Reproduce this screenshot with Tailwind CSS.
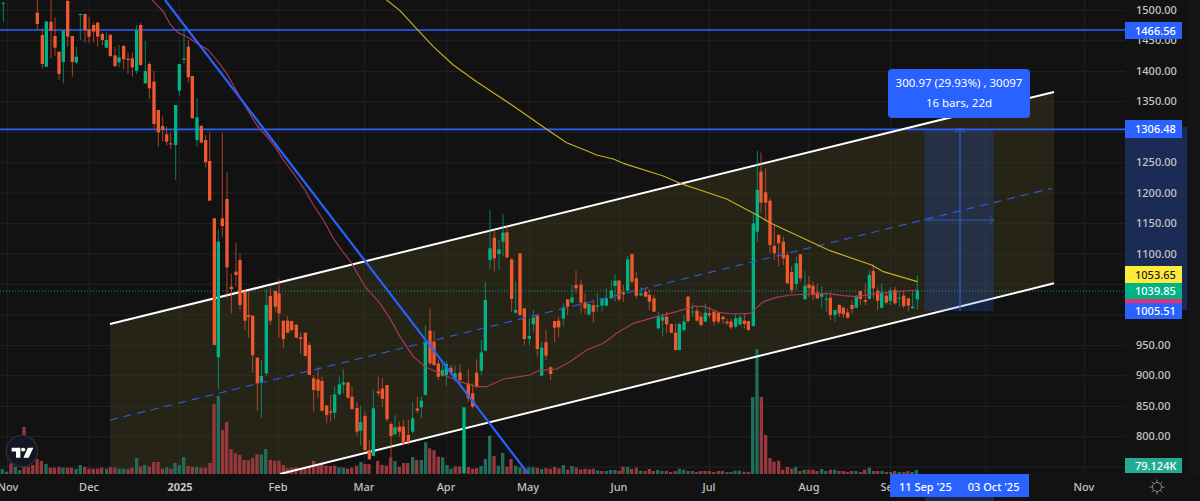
<!DOCTYPE html>
<html lang="en">
<head>
    <meta charset="UTF-8">
    <meta name="viewport" content="width=device-width, initial-scale=1.0">
    <title>Channel chart</title>
    <script src="https://cdn.jsdelivr.net/npm/@tailwindcss/browser@4"></script>
</head>
<body class="bg-[#121212]">
<div class="w-[1200px] h-[501px] overflow-hidden flex flex-col bg-[#121212] font-['Noto_Sans',sans-serif] text-[11px] text-[#c6c6c6]">

    <div class="flex h-[474px] shrink-0">
        <!-- chart pane, 3 svg units per screen pixel -->
        <div class="relative w-[1125px] h-[474px] shrink-0">
            <svg id="chart" class="block w-[1125px] h-[474px]" viewBox="0 0 3375 1422" fill="none">
                <g id="grid" stroke="#222222" stroke-width="3"></g>
                <polygon points="330,972 3162,276 3162,850 2200,1087 330,1547" fill="#272418" clip-path="url(#pane)"></polygon>
                <clipPath id="pane"><rect width="3375" height="1422"></rect></clipPath>
                <g id="grid2" stroke="#3a3628" stroke-width="3" opacity="0.55"></g>
                <g stroke="#2962ff" stroke-width="5">
                    <line x1="0" y1="90" x2="3375" y2="90"></line>
                    <line x1="0" y1="388" x2="3375" y2="388"></line>
                </g>
                <line x1="0" y1="873" x2="3375" y2="873" stroke="#089f7c" stroke-width="3" stroke-dasharray="3 6"></line>
                <g id="volume"></g>
                <g stroke="#ffffff" stroke-width="6">
                    <line x1="330" y1="972" x2="3162" y2="276"></line>
                    <line x1="840" y1="1422" x2="3162" y2="850"></line>
                </g>
                <g id="candles"></g>
                <line x1="330" y1="1260" x2="3155" y2="565" stroke="#2c5cd8" stroke-width="3.5" stroke-dasharray="24 18"></line>
                <polyline id="ma50" stroke="#a83a58" stroke-width="3.5" stroke-linejoin="round"></polyline>
                <polyline id="ma200" stroke="#cbae1f" stroke-width="3.5" stroke-linejoin="round"></polyline>
                <line x1="495" y1="0" x2="1585" y2="1422" stroke="#2962ff" stroke-width="6.5"></line>
                <!-- date and price range tool -->
                <rect x="2773" y="388" width="208" height="545" fill="#2962ff" fill-opacity="0.2"></rect>
                <g stroke="#2b5fe6" stroke-width="3.5">
                    <line x1="2880" y1="388" x2="2880" y2="933"></line>
                    <polyline points="2867,397 2880,384 2893,397"></polyline>
                </g>
                <g stroke="#2b5bd0" stroke-width="3">
                    <line x1="2770" y1="660" x2="2980" y2="660"></line>
                    <polyline points="2967,646 2981,660 2967,674"></polyline>
                </g>
                <!-- tradingview badge -->
                <circle cx="66" cy="1353" r="47" fill="#131722" stroke="#2a2e39" stroke-width="4"></circle>
                <g transform="translate(35 1343) scale(1.86 1.67)" fill="#ffffff">
                    <path d="M0 0H14V18H7V7H0Z"></path>
                    <circle cx="18.5" cy="3.5" r="3.5"></circle>
                    <path d="M26 0H35L27.5 18H19Z"></path>
                </g>
            </svg>
            <div class="absolute left-[888px] top-[69px] w-[142px] h-[49px] rounded bg-[#2962ff] text-white text-[11.5px] leading-[20px] text-center pt-[4px]">
                <div>300.97 (29.93%) , 30097</div>
                <div>16 bars, 22d</div>
            </div>
        </div>

        <!-- price scale -->
        <div class="relative w-[62px] h-[474px] shrink-0">
            <div class="absolute left-0 top-[127px] w-[62px] h-[183px] bg-[#1a2b55]"></div>
            <div class="relative flex flex-col pl-[11px] pt-[2px] font-medium">
                <div class="h-[30.45px] leading-[16px]">1500.00</div>
                <div class="h-[30.45px] leading-[16px]">1450.00</div>
                <div class="h-[30.45px] leading-[16px]">1400.00</div>
                <div class="h-[30.45px] leading-[16px]">1350.00</div>
                <div class="h-[30.45px]"></div>
                <div class="h-[30.45px] leading-[16px]">1250.00</div>
                <div class="h-[30.45px] leading-[16px]">1200.00</div>
                <div class="h-[30.45px] leading-[16px]">1150.00</div>
                <div class="h-[30.45px] leading-[16px]">1100.00</div>
                <div class="h-[30.45px]"></div>
                <div class="h-[30.45px]"></div>
                <div class="h-[30.45px] leading-[16px]">950.00</div>
                <div class="h-[30.45px] leading-[16px]">900.00</div>
                <div class="h-[30.45px] leading-[16px]">850.00</div>
                <div class="h-[30.45px] leading-[16px]">800.00</div>
            </div>
            <div class="absolute left-0 top-[22px] w-[57px] h-[17px] bg-[#2962ff] text-white font-medium leading-[17px] pl-[10px]">1466.56</div>
            <div class="absolute left-0 top-[120px] w-[57px] h-[18px] bg-[#2962ff] text-white font-medium leading-[18px] pl-[10px]">1306.48</div>
            <div class="absolute left-0 top-[266px] w-[57px] flex flex-col font-medium">
                <div class="h-[17px] bg-[#ffeb3b] text-[#1c1c1c] leading-[17px] pl-[10px]">1053.65</div>
                <div class="h-[16px] bg-[#00b386] text-white leading-[16px] pl-[10px]">1039.85</div>
                <div class="h-[4px] bg-[#e8306e]"></div>
                <div class="h-[16px] bg-[#2962ff] text-white leading-[16px] pl-[10px]">1005.51</div>
            </div>
            <div class="absolute left-0 top-[458px] w-[57px] h-[15px] bg-[#22ab94] text-white font-medium leading-[15px] pl-[10px]">79.124K</div>
        </div>
        <div class="w-[13px] bg-[#151515]"></div>
    </div>

    <!-- time scale -->
    <div class="relative flex h-[27px] shrink-0 items-center font-medium text-[#c2c2c2]">
        <span class="w-[60px] text-center ml-[-22px]">Nov</span>
        <span class="w-[60px] text-center ml-[21px]">Dec</span>
        <span class="w-[60px] text-center ml-[31px] font-bold">2025</span>
        <span class="w-[60px] text-center ml-[38px]">Feb</span>
        <span class="w-[60px] text-center ml-[26px]">Mar</span>
        <span class="w-[60px] text-center ml-[22px]">Apr</span>
        <span class="w-[60px] text-center ml-[22px]">May</span>
        <span class="w-[60px] text-center ml-[31px]">Jun</span>
        <span class="w-[60px] text-center ml-[30px]">Jul</span>
        <span class="w-[60px] text-center ml-[40px]">Aug</span>
        <span class="w-[60px] text-center ml-[21px]">Sep</span>
        <span class="w-[60px] text-center ml-[134px]">Nov</span>
        <div class="absolute left-[925px] bottom-0 w-[69px] h-[5px] bg-[#1b2a4a]"></div>
        <div class="absolute left-[890px] top-0 w-[139px] h-[23px] bg-[#2962ff] text-white flex items-center pt-[3px] pl-[9px] gap-[16px]">
            <span>11 Sep '25</span>
            <span>03 Oct '25</span>
        </div>
        <svg class="absolute left-[1149px] top-[5px] w-[16px] h-[16px]" viewBox="0 0 16 16" fill="none" stroke="#8d8d8d" stroke-width="1">
            <circle cx="8" cy="8" r="4.5"></circle>
            <path d="M8 .5v2.5M8 13v2.5M.5 8H3M13 8h2.5M2.7 2.7l1.8 1.8M11.5 11.5l1.8 1.8M2.7 13.3l1.8-1.8M11.5 4.5l1.8-1.8"></path>
        </svg>
    </div>
</div>

<script>
// all chart data is in svg units: [x, wickTop, bodyTop, bodyBottom, wickBottom, up]
const candleParts = [
    [0, 0, [
        [10,8,8,11,66,1],[112,0,38,72,88,0],[127,85,105,192,205,0],[139,62,65,200,202,1],[153,0,65,92,175,0],
        [165,52,108,143,168,0],[177,155,155,222,240,0],[190,90,92,186,250,1],[203,0,3,110,140,0],[217,108,108,186,230,0],
        [229,140,170,187,192,1],[241,40,42,45,120,1],[255,40,42,90,128,0],[267,50,88,110,128,0],[281,68,75,95,128,0],
        [293,66,68,110,140,0],[307,97,102,120,135,0],[319,97,120,143,143,1],[331,100,105,168,172,0],[345,140,166,198,202,0],
        [357,135,172,187,202,1],[371,135,138,178,207,0],[384,158,176,180,222,0],[397,158,175,202,230,0],[410,75,92,212,222,1],
        [422,68,75,195,198,0],[436,123,213,250,250,1],[448,185,192,265,297,0],[462,213,245,372,385,0],[475,330,330,397,440,0],
        [488,350,378,390,425,0],[500,380,403,425,437,0],[512,397,430,433,447,0],[527,315,315,435,540,1],[538,192,192,272,287,1],
        [552,85,175,179,192,1],[565,120,140,232,248,0],[577,228,228,355,355,0],[591,295,352,420,440,1],[604,375,378,428,430,0],
        [617,405,420,487,502,0],[629,397,483,602,602,0],[643,655,655,1035,1035,0],[655,688,725,1072,1168,1],[667,398,655,678,710,0],
        [681,517,597,802,895,0],[694,820,860,868,940,0],[708,728,815,825,860,0],[720,760,780,915,932,0],[735,870,875,962,990,0],
        [746,875,945,950,1013,0],[758,947,947,1066,1118,0],[772,1073,1073,1150,1233,0],[784,1080,1128,1146,1253,1],[799,868,915,1120,1128,1],
        [811,862,888,962,975,0],[826,872,873,920,935,0],[837,838,880,940,1012,0],[850,962,962,1017,1043,0],[863,948,962,998,1000,0],
        [875,962,963,990,993,0],[889,972,974,1013,1015,0],[902,998,1012,1017,1062,0],[916,997,998,1068,1070,0],[928,1027,1035,1125,1125,0],
        [941,1125,1135,1170,1235,0],[954,1102,1138,1172,1195,0],[966,1130,1143,1232,1235,0],[980,1215,1217,1245,1270,0],[992,1185,1234,1238,1265,0],
        [1004,1160,1183,1238,1258,1],[1018,1130,1153,1183,1185,1],[1030,1108,1147,1154,1180,1],[1044,1145,1147,1193,1197,0],[1056,1160,1190,1227,1230,0],
        [1071,1205,1224,1295,1308,0],[1082,1218,1267,1292,1335,1],[1095,1235,1248,1350,1355,0],[1108,1320,1350,1378,1380,0],[1120,1168,1225,1368,1368,1],
        [1135,1130,1174,1180,1190,0],[1147,1135,1166,1196,1220,0],[1161,1155,1155,1258,1265,0],[1173,1265,1272,1308,1372,0],[1185,1245,1282,1303,1305,1]
    ]],
    [1200, 600, [
        [-2,665,680,695,710,0],[10,660,680,730,735,0],[25,660,705,725,735,0],[38,605,655,695,700,1],[52,590,625,632,640,0],[64,590,602,622,655,1],
        [76,375,425,585,585,1],[90,325,392,490,495,0],[102,392,425,495,498,0],[115,480,490,530,540,0],[127,480,510,527,530,1],
        [139,483,492,525,558,1],[153,495,503,518,525,0],[165,495,520,535,545,1],[180,492,518,540,555,0],[192,622,622,820,820,1],
        [205,508,550,595,605,0],[218,550,580,620,625,0],[230,478,518,560,565,0],[244,420,457,512,525,1],[256,245,300,452,452,1],
        [270,30,145,180,208,1],[283,88,113,175,215,0],[297,120,148,162,210,1],[309,42,98,125,170,1],[321,78,97,172,175,0],
        [335,175,178,297,335,0],[347,245,330,338,340,1],[360,160,160,345,350,0],[373,325,325,417,435,0],[388,355,408,416,435,1],
        [400,330,353,373,395,1],[412,345,348,447,470,0],[425,425,443,527,527,1],[438,390,427,467,480,0],[452,498,502,522,540,0],
        [464,363,363,383,425,0],[476,350,362,382,412,0],[490,310,322,356,378,1],[503,298,298,320,345,0],[516,255,292,308,310,1],
        [528,212,255,265,280,0],[543,238,254,308,340,0],[555,280,308,325,342,0],[567,310,312,344,345,1],[580,300,316,335,368,0],
        [592,280,316,320,335,1],[606,295,295,317,335,1],[619,265,295,317,318,1],[634,240,272,295,295,1],[645,222,242,258,305,1],
        [657,240,242,298,305,0],[670,255,277,283,305,0],[683,168,178,272,272,1],[696,160,162,245,250,0],[709,215,235,287,295,0],
        [723,262,280,286,288,1],[737,265,275,290,292,0],[748,268,285,305,330,0],[762,285,295,335,335,0],[775,335,350,385,388,1],
        [788,340,350,362,410,1],[800,335,350,373,400,0],[814,370,372,398,400,0],[827,370,398,450,452,0],[838,368,372,450,450,1],
        [852,345,365,390,395,1],[864,288,290,363,368,0],[878,310,335,337,350,1],[891,320,332,362,365,0],[903,335,350,375,380,0],
        [916,310,338,365,365,1],[928,320,340,346,355,0],[942,330,335,365,378,0],[955,338,338,365,372,0],[969,348,350,358,372,0],
        [981,355,365,370,375,0],[993,355,365,382,388,0],[1007,340,355,380,385,1],[1020,345,352,373,378,1],[1033,342,362,372,385,0],
        [1045,365,363,390,393,0],[1060,40,70,378,380,1]
    ]],
    [2220, 420, [
        [52,33,150,275,305,1],[63,38,95,188,218,0],[77,85,157,188,245,0],[90,175,182,315,340,0],[103,255,317,340,360,0],
        [116,282,285,310,380,0],[130,290,305,355,375,0],[142,335,345,430,430,0],[155,378,396,450,460,0],[169,350,370,432,450,1],
        [181,343,343,415,425,0],[195,393,437,478,478,1],[207,408,433,445,470,0],[219,425,437,465,480,0],[232,430,457,475,478,0],
        [245,438,460,470,505,1],[259,462,476,479,515,1]
    ]],
    [2400, 765, [
        [91,110,128,180,195,0],[105,165,165,180,200,1],[118,148,150,175,185,0],[130,155,158,178,190,0],[143,160,172,188,192,0],
        [156,135,150,162,175,0],[169,120,122,158,160,1],[181,108,108,132,150,0],[196,85,135,140,150,0],[208,45,60,132,133,1],
        [220,28,48,100,130,0],[233,95,108,137,165,0],[245,85,112,158,160,1],[259,115,122,143,148,0],[271,97,107,138,150,1],
        [285,95,105,145,150,0],[298,112,128,131,155,1],[311,105,122,153,160,0],[325,130,130,152,168,0],[338,105,155,160,160,1],
        [352,62,105,133,163,1]
    ]]
];

// volume: [x, top, up], y offset keeps the numbers as read off the pane bottom
const volumeParts = [
    [0, [[7,132,1],[20,140,1],[33,115,0],[46,125,1],[59,135,1],[72,6,0],[85,125,0],[98,120,0],[111,102,0],[124,108,0],[138,117,1],[151,128,0],[163,128,0],[177,126,0],[189,128,1],[202,128,0],[214,128,0],[228,132,1],[241,120,1],[254,126,0],[267,131,0],[280,131,0],[293,131,0],[305,128,0],[320,131,1],[332,126,0],[345,128,0],[358,131,1],[371,131,1],[384,133,0],[396,128,0],[410,99,1],[422,125,0],[434,120,1],[448,125,0],[461,111,0],[474,111,0],[487,131,0],[500,127,1],[513,131,0],[525,114,1],[538,120,1],[551,96,1],[564,123,0],[577,126,0],[590,126,1],[603,128,0],[616,128,0],[630,114,0],[642,-63,0],[655,-88,1],[668,15,0],[680,-9,0],[693,72,0],[706,85,0],[719,90,0],[732,105,0],[745,106,0],[758,99,0],[771,88,0],[784,88,1],[797,72,1],[811,105,0],[824,107,0],[837,107,0],[850,120,0],[862,130,0],[875,128,0],[888,127,0]]],
    [900, [[3,130,0],[15,128,0],[28,125,0],[41,108,0],[54,120,0],[65,115,0],[78,122,0],[91,123,0],[104,122,0],[117,127,1],[130,128,1],[142,131,0],[155,128,0],[170,122,0],[183,111,1],[195,117,0],[207,117,0],[233,108,0],[246,120,0],[259,122,0],[272,97,0],[285,108,1],[298,125,0],[311,114,0],[323,114,0],[338,96,1],[350,105,0],[364,105,1],[377,52,1],[389,70,0],[402,76,0],[415,95,0],[428,97,1],[441,120,1],[453,131,1],[466,124,0],[479,124,0],[505,126,0],[518,131,0],[530,129,0],[543,123,1],[556,102,1],[569,32,1],[582,93,0],[595,122,1],[608,84,1],[621,125,0],[633,102,0],[647,122,1],[660,127,1],[673,133,0],[686,127,1],[699,127,1],[712,128,0],[725,132,1],[738,129,0],[751,131,0],[764,126,0],[777,130,0],[790,120,1],[803,134,0],[816,123,1],[829,128,0],[842,133,0],[855,131,0],[868,133,0],[880,131,0],[893,136,1]]],
    [1800, [[5,138,0],[19,138,1],[32,135,1],[45,135,1],[58,138,0],[69,125,0],[83,126,1],[95,132,0],[109,128,0],[122,137,1],[135,138,0],[148,132,0],[160,138,0],[173,135,1],[186,138,1],[199,138,0],[212,141,0],[226,138,0],[238,131,1],[251,134,1],[264,138,0],[277,138,1],[290,141,0],[302,138,0],[315,138,0],[328,138,0],[341,141,0],[355,138,0],[367,138,0],[381,141,1],[393,141,0],[405,137,1],[418,137,1],[432,140,0],[445,141,0],[458,-84,1],[471,-228,1],[484,-84,0],[497,30,0],[510,99,0],[522,110,0],[536,107,0],[548,134,0],[562,126,0],[575,131,0],[587,126,1],[600,138,0],[613,134,1],[626,134,0],[639,134,0],[651,138,0],[665,132,1],[677,138,1],[691,134,0],[704,134,1],[717,138,0],[730,138,0],[742,141,0],[755,138,0],[768,138,1],[782,141,0],[794,134,0],[808,128,1],[821,138,0],[833,138,0],[846,138,1],[859,141,0],[872,141,1],[884,138,0],[898,141,1],[911,141,0],[923,138,0],[936,141,1],[949,135,1]]]
];

const ma200Points = "1130,-30 1160,0 1200,32 1255,92 1300,140 1360,195 1430,245 1455,262 1540,318 1640,388 1700,428 1760,452 1790,465 1840,477 1870,490 1990,528 2040,550 2100,570 2180,597 2265,642 2310,668 2400,710 2490,752 2615,795 2650,815 2752,845";
const ma50Points = "457,0 490,35 510,72 530,95 560,110 600,135 625,150 650,180 680,220 705,265 740,325 770,375 800,410 825,440 850,480 880,520 915,570 940,615 970,660 1000,715 1025,750 1055,790 1095,860 1140,910 1170,955 1200,1010 1240,1070 1275,1100 1310,1115 1380,1145 1430,1160 1460,1160 1510,1137 1590,1125 1615,1112 1670,1107 1710,1085 1760,1050 1810,1030 1850,1000 1900,970 1970,950 2030,935 2085,918 2115,920 2160,938 2200,942 2250,940 2290,905 2330,892 2370,885 2480,880 2530,887 2570,890 2630,880 2752,870";

const gridXs = [22, 268, 538, 835, 1093, 1340, 1588, 1858, 2128, 2427, 2672, 2957, 3253];
let gridHtml = "";
for (let i = 0; i < 16; i++) {
    const y = Math.round(31 + i * 91.35);
    gridHtml += `<line x1="0" y1="${y}" x2="3375" y2="${y}"></line>`;
}
gridXs.forEach(x => {
    gridHtml += `<line x1="${x}" y1="0" x2="${x}" y2="1422"></line>`;
});
document.getElementById("grid").innerHTML = gridHtml;

// grid shows a bit lighter through the channel fill
document.getElementById("grid2").innerHTML = gridHtml;
document.getElementById("grid2").setAttribute("clip-path", "url(#channel)");
const channelClip = document.createElementNS("http://www.w3.org/2000/svg", "clipPath");
channelClip.id = "channel";
channelClip.innerHTML = '<polygon points="330,972 3162,276 3162,850 840,1422 330,1422"></polygon>';
document.getElementById("chart").appendChild(channelClip);

let volumeHtml = "";
volumeParts.forEach(([dx, rows]) => {
    rows.forEach(([x, top, up]) => {
        const y = 1275 + top;
        volumeHtml += `<rect x="${x + dx - 5}" y="${y}" width="10" height="${1422 - y}" fill="${up ? "#1f6e5c" : "#96383c"}"></rect>`;
    });
});
document.getElementById("volume").innerHTML = volumeHtml;

let candleHtml = "";
candleParts.forEach(([dx, dy, rows]) => {
    rows.forEach(([x, wt, bt, bb, wb, up]) => {
        const color = up ? "#00b386" : "#f0592f";
        const cx = x + dx;
        candleHtml += `<line x1="${cx}" y1="${wt + dy}" x2="${cx}" y2="${wb + dy}" stroke="${color}" stroke-width="2.6" stroke-opacity="0.8"></line>`;
        candleHtml += `<rect x="${cx - 5}" y="${bt + dy}" width="10" height="${bb - bt}" fill="${color}"></rect>`;
    });
});
document.getElementById("candles").innerHTML = candleHtml;

document.getElementById("ma200").setAttribute("points", ma200Points);
document.getElementById("ma50").setAttribute("points", ma50Points);
</script>
</body>
</html>
